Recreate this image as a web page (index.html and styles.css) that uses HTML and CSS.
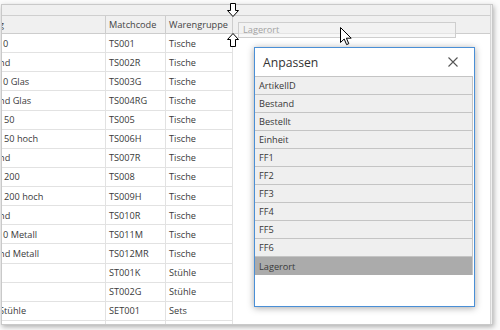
FILE: index.html
```html
<!DOCTYPE html>
<html lang="de">
<head>
    <meta charset="UTF-8">
    <title>Anpassen</title>
    <link rel="stylesheet" href="styles.css">
</head>
<body>
    <div class="window">
        <div class="group-strip"></div>
        <div class="grid">
            <div class="row head">
                <div class="cell c1"><span class="cut">g</span></div>
                <div class="cell c2">Matchcode</div>
                <div class="cell c3">Warengruppe</div>
                <div class="cell rest"></div>
            </div>
            <div class="row"><div class="cell c1"><span class="in">0</span></div><div class="cell c2">TS001</div><div class="cell c3">Tische</div><div class="cell rest"></div></div>
            <div class="row"><div class="cell c1"><span class="cut">nd</span></div><div class="cell c2">TS002R</div><div class="cell c3">Tische</div><div class="cell rest"></div></div>
            <div class="row"><div class="cell c1"><span class="in">0 Glas</span></div><div class="cell c2">TS003G</div><div class="cell c3">Tische</div><div class="cell rest"></div></div>
            <div class="row"><div class="cell c1"><span class="cut">nd Glas</span></div><div class="cell c2">TS004RG</div><div class="cell c3">Tische</div><div class="cell rest"></div></div>
            <div class="row"><div class="cell c1"><span class="in2">50</span></div><div class="cell c2">TS005</div><div class="cell c3">Tische</div><div class="cell rest"></div></div>
            <div class="row"><div class="cell c1"><span class="in2">50 hoch</span></div><div class="cell c2">TS006H</div><div class="cell c3">Tische</div><div class="cell rest"></div></div>
            <div class="row"><div class="cell c1"><span class="cut">nd</span></div><div class="cell c2">TS007R</div><div class="cell c3">Tische</div><div class="cell rest"></div></div>
            <div class="row"><div class="cell c1"><span class="in2">200</span></div><div class="cell c2">TS008</div><div class="cell c3">Tische</div><div class="cell rest"></div></div>
            <div class="row"><div class="cell c1"><span class="in2">200 hoch</span></div><div class="cell c2">TS009H</div><div class="cell c3">Tische</div><div class="cell rest"></div></div>
            <div class="row"><div class="cell c1"><span class="cut">nd</span></div><div class="cell c2">TS010R</div><div class="cell c3">Tische</div><div class="cell rest"></div></div>
            <div class="row"><div class="cell c1"><span class="in">0 Metall</span></div><div class="cell c2">TS011M</div><div class="cell c3">Tische</div><div class="cell rest"></div></div>
            <div class="row"><div class="cell c1"><span class="cut">nd Metall</span></div><div class="cell c2">TS012MR</div><div class="cell c3">Tische</div><div class="cell rest"></div></div>
            <div class="row"><div class="cell c1"></div><div class="cell c2">ST001K</div><div class="cell c3">Stühle</div><div class="cell rest"></div></div>
            <div class="row"><div class="cell c1"></div><div class="cell c2">ST002G</div><div class="cell c3">Stühle</div><div class="cell rest"></div></div>
            <div class="row"><div class="cell c1"><span class="cut">Stühle</span></div><div class="cell c2">SET001</div><div class="cell c3">Sets</div><div class="cell rest"></div></div>
            <div class="row"><div class="cell c1"></div><div class="cell c2"></div><div class="cell c3"></div><div class="cell rest"></div></div>
        </div>
    </div>

    <!-- drag feedback over the header -->
    <svg class="arrow arrow-down" width="12" height="14" viewBox="0 0 12 14">
        <path d="M3.5 0.5 H8.5 V7.5 H11.5 L6 13.5 L0.5 7.5 H3.5 Z" fill="#fff" stroke="#000" stroke-width="1"/>
    </svg>
    <svg class="arrow arrow-up" width="12" height="14" viewBox="0 0 12 14">
        <path d="M3.5 13.5 H8.5 V6.5 H11.5 L6 0.5 L0.5 6.5 H3.5 Z" fill="#fff" stroke="#000" stroke-width="1"/>
    </svg>
    <div class="ghost">Lagerort</div>
    <svg class="pointer" width="12" height="19" viewBox="0 0 12 19">
        <path d="M0.5 0.5 V15.5 L4.2 12 L6.6 17.6 L8.8 16.7 L6.4 11.2 H11.2 Z" fill="#fff" stroke="#000" stroke-width="1" stroke-linejoin="round"/>
    </svg>

    <div class="dialog">
        <div class="dialog-title">
            <span>Anpassen</span>
            <svg class="close" width="10" height="10" viewBox="0 0 10 10">
                <path d="M0.5 0.5 L9.5 9.5 M9.5 0.5 L0.5 9.5" stroke="#555" stroke-width="1.1"/>
            </svg>
        </div>
        <div class="field-list">
            <div class="field">ArtikelID</div>
            <div class="field">Bestand</div>
            <div class="field">Bestellt</div>
            <div class="field">Einheit</div>
            <div class="field">FF1</div>
            <div class="field">FF2</div>
            <div class="field">FF3</div>
            <div class="field">FF4</div>
            <div class="field">FF5</div>
            <div class="field">FF6</div>
            <div class="field selected">Lagerort</div>
        </div>
    </div>
</body>
</html>
```

FILE: styles.css
```css
body {
    margin: 0;
    width: 500px;
    height: 330px;
    overflow: hidden;
    background-color: #fbfbfb;
    font-family: "Open Sans", "Liberation Sans", sans-serif;
    font-size: 9.2px;
    color: #3a3a3a;
}
.window {
    margin: 4px 0 0 1px;
    width: 492px;
    height: 321px;
    box-sizing: border-box;
    border: 1px solid #c9c9c9;
    background-color: #f0f0f0;
    padding-right: 1px;
    box-shadow: 1px 2px 5px rgba(0,0,0,0.3);
    display: flex;
    flex-direction: column;
    overflow: hidden;
}
.group-strip {
    height: 11px;
    flex: none;
    box-sizing: border-box;
    border-bottom: 1px solid #cfcfcf;
    border-right: 1px solid #d6d6d6;
}
.grid {
    flex: 1;
    background-color: #fff;
    border-right: 1px solid #d6d6d6;
    overflow: hidden;
}
.row {
    display: grid;
    grid-template-columns: 104px 60px 67px 1fr;
    height: 19.14px;
    box-sizing: border-box;
}
.cell {
    display: flex;
    align-items: center;
    white-space: nowrap;
    box-sizing: border-box;
    padding-left: 3px;
    border-right: 1px solid #e2e2e2;
    border-bottom: 1px solid #e2e2e2;
}
.cell.c1 {
    padding-left: 0;
}
.cell.rest {
    border: none;
}
.head {
    height: 18px;
    background-color: #f0f0f0;
    color: #444;
}
.head .cell {
    border-right-color: #cdcdcd;
    border-bottom-color: #cdcdcd;
}
.head .cell.rest {
    border-bottom: 1px solid #cdcdcd;
}
.in {
    margin-left: 1px;
}
.in2 {
    margin-left: 2px;
}
.cut {
    margin-left: -3px;
}

/* drag & drop feedback */
.arrow {
    position: absolute;
    left: 227px;
}
.arrow-down {
    top: 3px;
}
.arrow-up {
    top: 33px;
}
.ghost {
    position: absolute;
    left: 238px;
    top: 22px;
    width: 218px;
    height: 16px;
    box-sizing: border-box;
    border: 1px solid #cecece;
    background-color: rgba(244,244,244,0.6);
    color: #a3a3a3;
    padding-left: 4px;
    line-height: 14px;
}
.pointer {
    position: absolute;
    left: 340px;
    top: 27px;
}

/* Anpassen dialog */
.dialog {
    position: absolute;
    left: 254px;
    top: 47px;
    width: 221px;
    height: 260px;
    box-sizing: border-box;
    border: 1px solid #4a8fd6;
    background-color: #fff;
    box-shadow: 0 1px 7px rgba(0,0,0,0.35);
    display: flex;
    flex-direction: column;
}
.dialog-title {
    height: 28px;
    flex: none;
    display: flex;
    align-items: center;
    justify-content: space-between;
    padding: 0 16px 0 8px;
    font-size: 12.2px;
    color: #333;
}
.field-list {
    margin-right: 1px;
    display: flex;
    flex-direction: column;
}
.field {
    height: 18px;
    box-sizing: border-box;
    border-top: 1px solid #c4c4c4;
    border-right: 1px solid #c4c4c4;
    background-color: #efefef;
    padding-left: 4px;
    display: flex;
    align-items: center;
    color: #383838;
}
.field.selected {
    height: 19px;
    background-color: #ababab;
    color: #3a3a3a;
}
```
